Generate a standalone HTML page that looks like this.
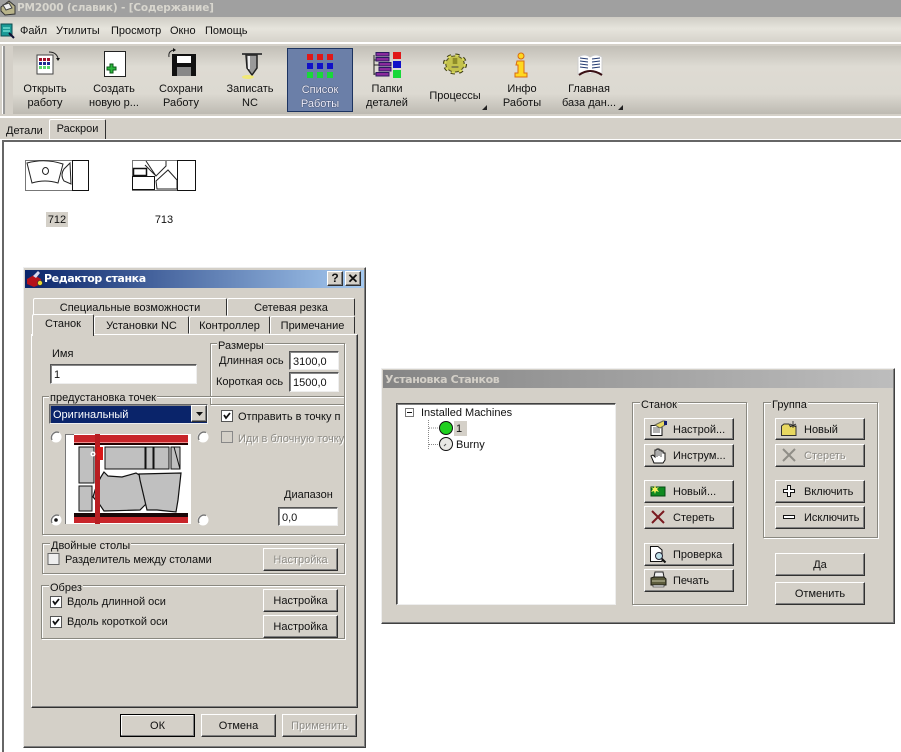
<!DOCTYPE html>
<html><head><meta charset="utf-8"><style>
html,body{margin:0;padding:0;background:#fff}
#p{position:relative;width:901px;height:752px;overflow:hidden;background:#fff;font:11px/14px "Liberation Sans",sans-serif;color:#111;filter:blur(.3px)}
#p div{position:absolute;box-sizing:border-box}
.t{white-space:nowrap;margin-top:1px}
.c{text-align:center;white-space:nowrap;margin-top:1px}
.b{background:#d4d0c8;border:1px solid;border-color:#fff #303030 #303030 #fff;box-shadow:inset -1px -1px #808080;text-align:center;white-space:nowrap;line-height:22px}
.g{border:1px solid #8a8880;box-shadow:1px 1px #fff,inset 1px 1px #fff}
.l{background:#d4d0c8;padding:0 1px;white-space:nowrap;margin-top:1px}
.i{background:#fff;border:1px solid;border-color:#555 #eee #eee #555;box-shadow:inset 1px 1px #888;padding-left:3px;line-height:20px;white-space:nowrap;overflow:hidden}
.d{color:#8d8b85;text-shadow:1px 1px #fff}
.tb{background:#d4d0c8;border:1px solid;border-color:#fff #303030 transparent #fff;border-radius:2px 2px 0 0;text-align:center;white-space:nowrap;line-height:19px}
</style></head><body><div id="p">
<div style="left:0;top:0;width:901px;height:140px;background:#d4d0c8"></div>
<div style="left:0;top:0;width:901px;height:17px;background:#a0a0a0"></div>
<div class="t" style="left:17px;top:0;font:bold 10.5px/15px 'DejaVu Sans',sans-serif;color:#d8d6ce;letter-spacing:-.15px">PM2000 (славик) - [Содержание]</div>
<div style="left:0;top:17px;width:901px;height:26px;background:linear-gradient(#d0cdc5,#e6e4dc 45%,#d4d1c9)"></div>
<div style="left:0;top:42px;width:901px;height:2px;background:#fff"></div>
<div class="t" style="left:20px;top:23px">Файл</div>
<div class="t" style="left:56px;top:23px">Утилиты</div>
<div class="t" style="left:111px;top:23px">Просмотр</div>
<div class="t" style="left:170px;top:23px">Окно</div>
<div class="t" style="left:205px;top:23px">Помощь</div>
<div style="left:13px;top:46px;width:888px;height:68px;background:linear-gradient(#c2bfb7,#dedbd3 30%,#dcd9d1 70%,#bdbab2)"></div>
<div style="left:3px;top:46px;width:2px;height:68px;background:#999;box-shadow:-1px 0 #fff"></div>
<div style="left:0;top:116px;width:901px;height:2px;background:#fff"></div>
<div style="left:287px;top:48px;width:66px;height:64px;background:#6b7fa8;border:1px solid #1c3360"></div>
<div class="c" style="left:5px;top:81px;width:80px">Открыть<br>работу</div>
<div class="c" style="left:74px;top:81px;width:80px">Создать<br>новую р...</div>
<div class="c" style="left:141px;top:81px;width:80px">Сохрани<br>Работу</div>
<div class="c" style="left:210px;top:81px;width:80px">Записать<br>NC</div>
<div class="c" style="left:280px;top:82px;width:80px;color:#eef;text-shadow:0 0 1px #111">Список<br>Работы</div>
<div class="c" style="left:347px;top:81px;width:80px">Папки<br>деталей</div>
<div class="c" style="left:415px;top:88px;width:80px">Процессы</div>
<div class="c" style="left:482px;top:81px;width:80px">Инфо<br>Работы</div>
<div class="c" style="left:549px;top:81px;width:80px">Главная<br>база дан...</div>

<div class="t" style="left:6px;top:123px">Детали</div>
<div class="tb" style="left:49px;top:119px;width:57px;height:21px">Раскрои</div>
<div style="left:0;top:139px;width:901px;height:1px;background:#fff"></div>
<div style="left:2px;top:140px;width:899px;height:612px;background:#fff;border-left:2px solid #666;border-top:2px solid #666"></div>
<div style="left:46px;top:212px;width:22px;height:15px;background:#d4d0c8"></div>
<div class="c" style="left:27px;top:212px;width:60px">712</div>
<div class="c" style="left:134px;top:212px;width:60px">713</div>

<!-- Dialog 1 -->
<div style="left:23px;top:267px;width:343px;height:481px;background:#d4d0c8;border:1px solid;border-color:#eee #404040 #404040 #eee;box-shadow:inset -1px -1px #808080"></div>
<div style="left:25px;top:270px;width:339px;height:18px;background:linear-gradient(90deg,#0a246a,#a6caf0)"></div>
<div class="t" style="left:44px;top:270px;font:bold 11px/15px 'DejaVu Sans',sans-serif;color:#fff;letter-spacing:-.4px">Редактор станка</div>
<div class="b" style="left:327px;top:271px;width:16px;height:15px;font:bold 12px/13px 'Liberation Sans',sans-serif">?</div>
<div class="b" style="left:345px;top:271px;width:16px;height:15px;font:bold 13px/13px 'Liberation Sans',sans-serif">✕</div>

<div class="tb" style="left:33px;top:298px;width:194px;height:18px">Специальные возможности</div>
<div class="tb" style="left:227px;top:298px;width:128px;height:18px">Сетевая резка</div>
<div style="left:31px;top:334px;width:327px;height:374px;background:#d4d0c8;border:1px solid;border-color:#fff #303030 #303030 #fff;box-shadow:inset -1px -1px #808080"></div>
<div class="tb" style="left:94px;top:316px;width:95px;height:18px">Установки NC</div>
<div class="tb" style="left:189px;top:316px;width:81px;height:18px">Контроллер</div>
<div class="tb" style="left:270px;top:316px;width:85px;height:18px">Примечание</div>
<div class="tb" style="left:32px;top:314px;width:62px;height:22px;border-bottom:0;z-index:2">Станок</div>

<div class="t" style="left:52px;top:346px">Имя</div>
<div class="i" style="left:50px;top:364px;width:147px;height:20px">1</div>
<div class="g" style="left:210px;top:343px;width:135px;height:62px"></div>
<div class="l" style="left:217px;top:338px">Размеры</div>
<div class="t" style="left:219px;top:353px">Длинная ось</div>
<div class="i" style="left:289px;top:351px;width:50px;height:19px">3100,0</div>
<div class="t" style="left:216px;top:374px">Короткая ось</div>
<div class="i" style="left:289px;top:372px;width:50px;height:20px">1500,0</div>
<div class="g" style="left:42px;top:396px;width:303px;height:139px"></div>
<div class="l" style="left:49px;top:390px">предустановка точек</div>
<div class="i" style="left:49px;top:404px;width:159px;height:20px;background:#0a246a;color:#fff;border-color:#666 #eee #eee #666">Оригинальный</div>
<div class="b" style="left:191px;top:405px;width:16px;height:17px"></div>
<div class="t" style="left:238px;top:409px;width:106px;overflow:hidden">Отправить в точку п</div>
<div class="t d" style="left:238px;top:431px;width:106px;overflow:hidden">Иди в блочную точку</div>
<div class="t" style="left:284px;top:487px">Диапазон</div>
<div class="i" style="left:278px;top:507px;width:60px;height:19px">0,0</div>
<div class="g" style="left:42px;top:543px;width:303px;height:31px"></div>
<div class="l" style="left:50px;top:538px">Двойные столы</div>
<div class="t" style="left:65px;top:552px">Разделитель между столами</div>
<div class="b d" style="left:263px;top:548px;width:75px;height:23px">Настройка</div>
<div class="g" style="left:41px;top:585px;width:304px;height:54px"></div>
<div class="l" style="left:49px;top:580px">Обрез</div>
<div class="t" style="left:67px;top:594px">Вдоль длинной оси</div>
<div class="t" style="left:67px;top:614px">Вдоль короткой оси</div>
<div class="b" style="left:263px;top:589px;width:75px;height:23px">Настройка</div>
<div class="b" style="left:263px;top:615px;width:75px;height:23px">Настройка</div>
<div class="b" style="left:120px;top:714px;width:75px;height:23px;border:1px solid #000;box-shadow:inset -1px -1px #808080,inset 1px 1px #fff">ОК</div>
<div class="b" style="left:201px;top:714px;width:75px;height:23px">Отмена</div>
<div class="b d" style="left:282px;top:714px;width:75px;height:23px">Применить</div>

<!-- Dialog 2 -->
<div style="left:381px;top:368px;width:514px;height:256px;background:#d4d0c8;border:1px solid;border-color:#eee #404040 #404040 #eee;box-shadow:inset -1px -1px #808080"></div>
<div style="left:383px;top:370px;width:510px;height:18px;background:linear-gradient(90deg,#858585,#bdbdbd)"></div>
<div class="t" style="left:385px;top:371px;font:bold 11px/15px 'DejaVu Sans',sans-serif;color:#d4d0c8;letter-spacing:-.4px">Установка Станков</div>
<div style="left:396px;top:403px;width:220px;height:202px;background:#fff;border:1px solid;border-color:#404040 #eee #eee #404040;box-shadow:inset 1px 1px #808080"></div>
<div class="t" style="left:421px;top:405px">Installed Machines</div>
<div style="left:454px;top:421px;width:13px;height:15px;background:#d4d0c8"></div>
<div class="t" style="left:456px;top:421px">1</div>
<div class="t" style="left:456px;top:437px">Burny</div>
<div class="g" style="left:632px;top:402px;width:115px;height:203px"></div>
<div class="l" style="left:640px;top:397px">Станок</div>
<div class="g" style="left:763px;top:402px;width:115px;height:136px"></div>
<div class="l" style="left:771px;top:397px">Группа</div>

<div class="b" style="left:644px;top:418px;width:90px;height:22px;padding-left:28px;text-align:left">Настрой...</div>
<div class="b" style="left:644px;top:444px;width:90px;height:23px;padding-left:28px;text-align:left">Инструм...</div>
<div class="b" style="left:644px;top:480px;width:90px;height:23px;padding-left:28px;text-align:left">Новый...</div>
<div class="b" style="left:644px;top:506px;width:90px;height:23px;padding-left:28px;text-align:left">Стереть</div>
<div class="b" style="left:644px;top:543px;width:90px;height:23px;padding-left:28px;text-align:left">Проверка</div>
<div class="b" style="left:644px;top:569px;width:90px;height:23px;padding-left:28px;text-align:left">Печать</div>
<div class="b" style="left:775px;top:418px;width:90px;height:22px;padding-left:28px;text-align:left">Новый</div>
<div class="b d" style="left:775px;top:444px;width:90px;height:23px;padding-left:28px;text-align:left">Стереть</div>
<div class="b" style="left:775px;top:480px;width:90px;height:23px;padding-left:28px;text-align:left">Включить</div>
<div class="b" style="left:775px;top:506px;width:90px;height:23px;padding-left:28px;text-align:left">Исключить</div>
<div class="b" style="left:775px;top:553px;width:90px;height:23px">Да</div>
<div class="b" style="left:775px;top:582px;width:90px;height:23px">Отменить</div>

<svg width="901" height="752" viewBox="0 0 901 752" style="position:absolute;left:0;top:0;z-index:5">
<defs>
<g id="rd"><circle r="5.5" fill="#fff"/><path d="M-4 3A5.500 5.500 0 0 1 3 -4.500" fill="none" stroke="#777" stroke-width="1.400"/></g>
</defs>
<!-- app icons -->
<path d="M1 7L9 1L15 6L15 14L5 15L1 11Z" fill="#b9b48a" stroke="#333"/><path d="M3 5L9 3L12 8L6 10Z" fill="#eee" stroke="#444"/>
<rect x="1" y="24" width="11" height="12" fill="#1a9a96" stroke="#0c4c50"/><path d="M3 28h7M3 31h7" stroke="#9fe"/><path d="M9 33l5 5" stroke="#113" stroke-width="2"/>
<!-- dialog title icon -->
<path d="M27 279L34 275L41 279L41 284L34 287L27 284Z" fill="#b5121b"/><path d="M33 276L38 271L40 273L36 278Z" fill="#d8d8f0"/><circle cx="40" cy="283" r="2.500" fill="#e8d830" stroke="#333" stroke-width=".6"/>
<!-- open -->
<rect x="37" y="55" width="16" height="19" fill="#fff" stroke="#444"/>
<g><path d="M39 58h3v3h-3zM43 58h3v3h-3zM47 58h3v3h-3z" fill="#a01028"/><path d="M39 62h3v3h-3zM43 62h3v3h-3zM47 62h3v3h-3z" fill="#1c2c90"/><path d="M39 66h3v3h-3zM43 66h3v3h-3zM47 66h3v3h-3z" fill="#5cd86c"/></g>
<path d="M49 52Q56 52 58 58" fill="none" stroke="#222"/><path d="M56 58h4l-2 3z" fill="#111"/>
<!-- new -->
<rect x="104.500" y="51.500" width="21" height="25" fill="#fff" stroke="#222"/>
<path d="M110 64h3v3h3v3h-3v3h-3v-3h-3v-3h3z" fill="#2cb83c" stroke="#0b5a1a"/>
<!-- save -->
<path d="M172 54h24v22h-24z" fill="#111"/><rect x="177" y="56" width="14" height="7" fill="#fff"/><rect x="177" y="67" width="14" height="9" fill="#888"/>
<path d="M169 57Q168 51 174 50" fill="none" stroke="#222"/><path d="M173 48l3 2-3 2z" fill="#111"/>
<!-- NC tool -->
<path d="M242 53h20v2h-20z" fill="#444"/><path d="M246 55h11v13l-5 7-5-7z" fill="#999" stroke="#222" stroke-width="1.500"/><path d="M249 56v13" stroke="#eee" stroke-width="2"/>
<ellipse cx="248" cy="77" rx="6" ry="2" fill="#f0e878"/>
<!-- list -->
<g fill="#e01818"><rect x="307" y="54" width="6" height="6"/><rect x="317" y="54" width="6" height="6"/><rect x="327" y="54" width="6" height="6"/></g>
<g fill="#1010c8"><rect x="307" y="63" width="6" height="6"/><rect x="317" y="63" width="6" height="6"/><rect x="327" y="63" width="6" height="6"/></g>
<g fill="#18d838"><rect x="307" y="72" width="6" height="6"/><rect x="317" y="72" width="6" height="6"/><rect x="327" y="72" width="6" height="6"/></g>
<!-- folders -->
<path d="M374 55v20M374 60h3M374 65h6M374 74h3" stroke="#222" fill="none"/>
<g fill="#8a2a9c" stroke="#2a1a60"><rect x="376" y="52.500" width="13" height="3.500"/><rect x="376" y="57.500" width="13" height="3.500"/><rect x="379" y="62.500" width="12" height="3.500"/><rect x="379" y="67.500" width="12" height="3.500"/><rect x="376" y="72.500" width="13" height="3.500"/></g>
<rect x="393" y="52" width="8" height="7" fill="#e01818"/><rect x="393" y="61" width="8" height="7" fill="#1010c8"/><rect x="393" y="70" width="8" height="8" fill="#18d838"/>
<!-- gear -->
<g transform="translate(455 64) scale(1.150 1)">
<circle r="9" fill="none" stroke="#3c3a14" stroke-width="3" stroke-dasharray="3.500 3.570"/>
<circle r="8" fill="#c4c24c" stroke="#55531f"/>
<circle r="8.500" fill="none" stroke="#dcdc60" stroke-width="2" stroke-dasharray="3 3.670"/>
<path d="M-2-6h4v6h-4z" fill="#8f8d28"/><path d="M-3 3h6" stroke="#444" stroke-width="1"/>
</g>
<!-- info -->
<circle cx="521" cy="56" r="3" fill="#ffd820" stroke="#d86a10"/><path d="M517 61h7v12h3v4h-12v-4h3v-8h-2z" fill="#ffd820" stroke="#d86a10"/>
<!-- book -->
<path d="M578 57Q585 53 590 57Q596 53 602 57V74Q596 70 590 74Q585 70 578 74Z" fill="#fff" stroke="#ccc"/>
<path d="M580 58l8 1M580 61l8 1M580 64l8 1M580 67l8 1M592 59l8-1M592 62l8-1M592 65l8-1M592 68l8-1" stroke="#233a70" stroke-width="1"/>
<path d="M579 75Q590 67 602 75" fill="none" stroke="#3a1014" stroke-width="2"/>
<path d="M482 110L487 105V110ZM618 110L623 105V110Z" fill="#222"/>

<!-- thumbs -->
<rect x="25.500" y="160.500" width="47" height="30" fill="none" stroke="#777"/><rect x="72.500" y="160.500" width="16" height="30" fill="#fff" stroke="#111"/>
<path d="M27 163Q45 158 63 164L58 183Q45 179 32 183Z" fill="none" stroke="#222"/><ellipse cx="45.500" cy="171" rx="3" ry="3.500" fill="none" stroke="#222"/>
<path d="M70 163L64 169Q60 175 64 181L71 184Z" fill="none" stroke="#222"/>
<rect x="132.500" y="160.500" width="45" height="30" fill="none" stroke="#777"/><rect x="177.500" y="160.500" width="18" height="30" fill="#fff" stroke="#111"/>
<rect x="133.500" y="168.500" width="13" height="7" fill="none" stroke="#111" stroke-width="1.500"/><rect x="132.500" y="176.500" width="22" height="13" fill="none" stroke="#111"/>
<path d="M146 161L156 176L166 166V161M145 165L156 176" fill="none" stroke="#222"/><path d="M156 181L168 170L177 180V189H157Z" fill="none" stroke="#222"/>

<!-- dialog1 controls -->
<path d="M196 412h7l-3.500 4z" fill="#111"/>
<rect x="221.500" y="410.500" width="11" height="11" fill="#fff" stroke="#555"/><path d="M224 415l2 3 4-5" fill="none" stroke="#111" stroke-width="1.800"/>
<rect x="221.500" y="431.500" width="11" height="11" fill="#d4d0c8" stroke="#888"/>
<rect x="48" y="553.500" width="11" height="11" fill="#eee" stroke="#666"/>
<rect x="50.500" y="596.500" width="11" height="11" fill="#fff" stroke="#555"/><path d="M53 601l2 3 4-5" fill="none" stroke="#111" stroke-width="1.800"/>
<rect x="50.500" y="616.500" width="11" height="11" fill="#fff" stroke="#555"/><path d="M53 621l2 3 4-5" fill="none" stroke="#111" stroke-width="1.800"/>
<use href="#rd" x="56" y="437"/><use href="#rd" x="203" y="437"/><use href="#rd" x="56" y="520"/><use href="#rd" x="203" y="520"/>
<circle cx="56" cy="520" r="1.800" fill="#111"/>
<!-- machine image -->
<rect x="65" y="434" width="126" height="90" fill="#fff"/><path d="M65.500 524V434.500H74" fill="none" stroke="#777"/>
<rect x="79" y="447" width="15" height="36" fill="#c0c0c0" stroke="#111"/><rect x="79" y="486" width="13" height="25" fill="#c0c0c0" stroke="#111"/>
<rect x="105" y="447" width="40" height="22" fill="#c0c0c0" stroke="#111"/><rect x="146" y="447" width="7" height="22" fill="#c0c0c0" stroke="#111"/><rect x="154" y="447" width="15" height="22" fill="#c0c0c0" stroke="#111"/><rect x="171" y="447" width="9" height="22" fill="#c0c0c0" stroke="#111"/>
<path d="M174 447L180 469" stroke="#111"/>
<path d="M93 497Q97 482 104 472L108 476L122 477L136 473L146 479L151 499L146 504L140 510L104 511L100 505Z" fill="#c0c0c0" stroke="#111" stroke-width="1.200"/>
<path d="M139 474L181 473L178 500L176 512L157 510L147 510L140 480Z" fill="#c0c0c0" stroke="#111" stroke-width="1.200"/>
<rect x="74" y="435" width="114" height="7" fill="#c8252a"/><rect x="74" y="442" width="114" height="1" fill="#f09090"/><rect x="74" y="443" width="114" height="2" fill="#200"/>
<rect x="74" y="513" width="114" height="4" fill="#1a0808"/><rect x="74" y="517" width="114" height="6" fill="#c8252a"/>
<rect x="95" y="434" width="5" height="90" fill="#b81e22"/><rect x="97" y="447" width="6" height="13" fill="#d81818"/>
<circle cx="93" cy="454" r="2.500" fill="#fff"/><circle cx="93" cy="454" r=".8" fill="#333"/>

<!-- tree -->
<rect x="405.500" y="408.500" width="8" height="8" fill="#fff" stroke="#777"/><path d="M407 412.500h5" stroke="#111"/>
<path d="M428.500 420v29M429 428h9M429 444.500h9" stroke="#888" stroke-dasharray="1 1" fill="none"/>
<circle cx="446" cy="428" r="6.500" fill="#1fd01f" stroke="#111"/><circle cx="446" cy="444" r="6.500" fill="#e8e8e4" stroke="#111"/><path d="M446 444l-2 2" stroke="#555"/>

<!-- d2 icons -->
<path d="M651 425.500H662V435.500H651Z" fill="#fff" stroke="#111"/><path d="M653 428h7M653 430h7M653 432h7" stroke="#333" stroke-width=".8"/><path d="M655 425L663 421H665V425L660 428Z" fill="#e8d860" stroke="#665"/><path d="M664 421h3v4h-3z" fill="#101c70"/>
<path d="M654 463L651 456L653 455L655 457V450H657V449H659V450H661V451H663V453H665V460L663 463Z" fill="#fff" stroke="#111"/><path d="M657 451v6M659 450v6M661 451v6" stroke="#111" stroke-width=".7"/>
<rect x="651" y="487" width="14" height="9" fill="#0f8a20" stroke="#064a12"/><path d="M655 485l1 3 3-1-2 2 2 3-3-1-1 3-1-3-3 1 2-3-2-2 3 1z" fill="#f8f060"/>
<path d="M652 511L664 523M664 511L652 523" stroke="#7a1a20" stroke-width="2"/>
<path d="M650.500 546.500H658L662 550V561.500H650.500Z" fill="#fff" stroke="#111"/><circle cx="659" cy="556" r="3.500" fill="#bfe0e8" stroke="#223"/><path d="M662 559l3.500 3.500" stroke="#111" stroke-width="2"/>
<path d="M655 572h8l1 5h-10z" fill="#eee" stroke="#222"/><path d="M651 578l3-1h10l2 2v6h-15z" fill="#5c5c3c" stroke="#1a1a10"/><path d="M652 581h13" stroke="#c8c8a8"/><path d="M653 585h11v2h-11z" fill="#ddd" stroke="#222" stroke-width=".6"/>
<path d="M781.500 435.500V426L784 424H789L790 426H796V435.500Z" fill="#e8d860" stroke="#333"/><path d="M793 421v7M790 424l6 3M796 424l-6 3" stroke="#222" stroke-width=".8"/>
<path d="M783 449L795 461M795 449L783 461" stroke="#8f8d87" stroke-width="2"/>
<path d="M787.500 485.500H790.500V489.500H794.500V492.500H790.500V496.500H787.500V492.500H783.500V489.500H787.500Z" fill="#fff" stroke="#111"/>
<rect x="783.500" y="515.500" width="11" height="3" fill="#fff" stroke="#111"/>
</svg>
</div></body></html>
